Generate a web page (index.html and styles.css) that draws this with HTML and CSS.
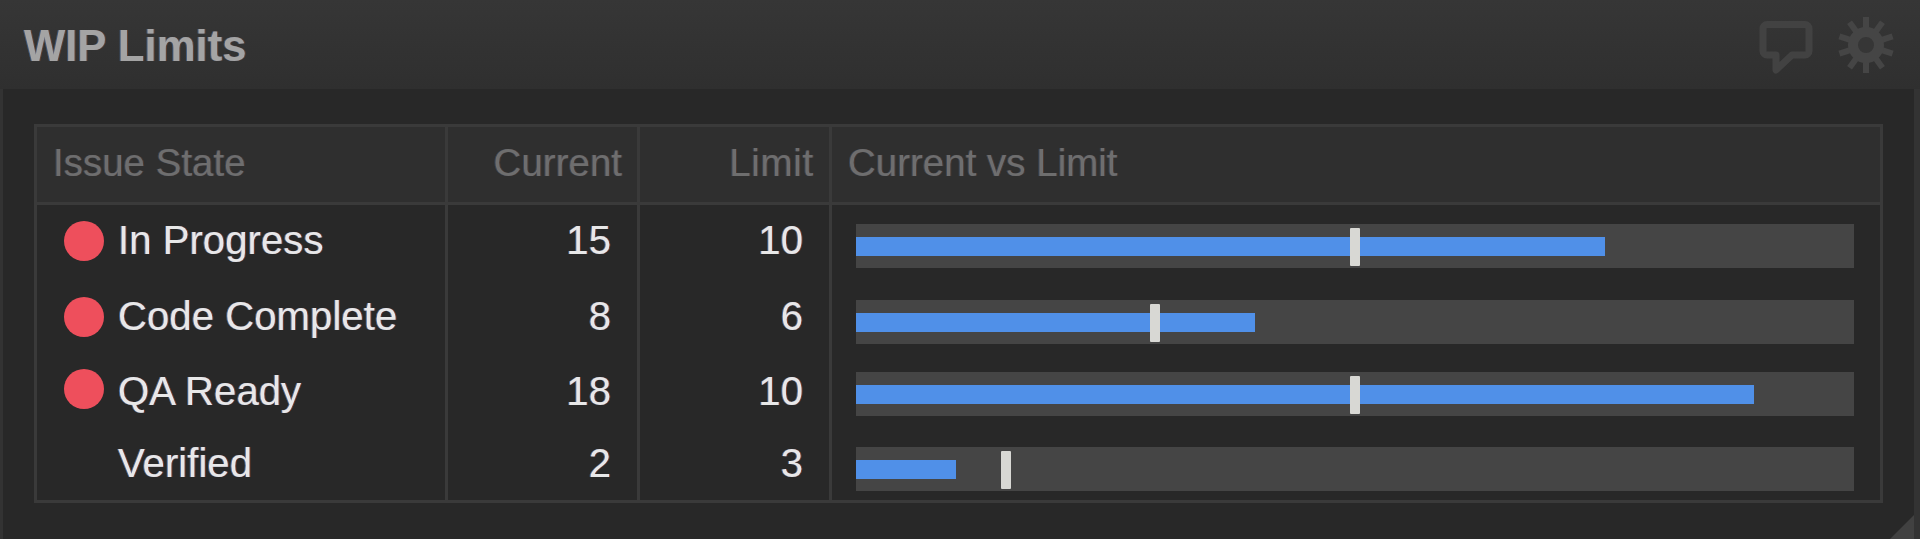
FILE: index.html
```html
<!DOCTYPE html>
<html lang="en">
<head>
<meta charset="utf-8">
<title>WIP Limits</title>
<link rel="stylesheet" href="styles.css">
</head>
<body>
<section class="panel">
  <header class="panel-head">
    <h1 class="panel-title">WIP Limits</h1>
    <div class="panel-tools">
      <svg class="icon-bubble" viewBox="0 0 54 54" aria-hidden="true"><path d="M8 3.500H46a4 4 0 0 1 4 4V30a4 4 0 0 1-4 4H33L17 49V34H8a4 4 0 0 1-4-4V7.500a4 4 0 0 1 4-4Z"/></svg>
      <svg class="icon-gear" viewBox="-29 -29 58 58" aria-hidden="true">
        <g class="gear-teeth">
          <line x1="0" y1="-28" x2="0" y2="28"/>
          <line x1="0" y1="-28" x2="0" y2="28" transform="rotate(36)"/>
          <line x1="0" y1="-28" x2="0" y2="28" transform="rotate(72)"/>
          <line x1="0" y1="-28" x2="0" y2="28" transform="rotate(108)"/>
          <line x1="0" y1="-28" x2="0" y2="28" transform="rotate(144)"/>
        </g>
        <circle class="gear-ring" r="13"/>
      </svg>
    </div>
  </header>
  <div class="panel-body">
    <div class="wip-table">
      <div class="cell head">Issue State</div>
      <div class="cell head num-head">Current</div>
      <div class="cell head num-head limit-head">Limit</div>
      <div class="cell head last">Current vs Limit</div>

      <div class="cell state"><span class="dot"></span><span class="label">In Progress</span></div>
      <div class="cell num"><span class="label">15</span></div>
      <div class="cell num"><span class="label">10</span></div>
      <div class="cell chart last"><div class="track"><div class="fill" style="width:75%"></div><div class="tick" style="left:50%"></div></div></div>

      <div class="cell state"><span class="dot"></span><span class="label">Code Complete</span></div>
      <div class="cell num"><span class="label">8</span></div>
      <div class="cell num"><span class="label">6</span></div>
      <div class="cell chart last"><div class="track"><div class="fill" style="width:40%"></div><div class="tick" style="left:30%"></div></div></div>

      <div class="cell state"><span class="dot"></span><span class="label low">QA Ready</span></div>
      <div class="cell num"><span class="label low">18</span></div>
      <div class="cell num"><span class="label low">10</span></div>
      <div class="cell chart last"><div class="track"><div class="fill" style="width:90%"></div><div class="tick" style="left:50%"></div></div></div>

      <div class="cell state"><span class="dot none"></span><span class="label">Verified</span></div>
      <div class="cell num"><span class="label">2</span></div>
      <div class="cell num"><span class="label">3</span></div>
      <div class="cell chart last"><div class="track"><div class="fill" style="width:10%"></div><div class="tick" style="left:15%"></div></div></div>
    </div>
  </div>
  <div class="resizer"></div>
</section>
</body>
</html>
```
FILE: styles.css
```css
* { box-sizing: border-box; }
html, body { margin: 0; height: 100%; }
body {
  background: #333;
  font-family: "Liberation Sans", Arial, sans-serif;
  overflow: hidden;
}
.panel {
  position: relative;
  height: 539px;
  display: flex;
  flex-direction: column;
  filter: blur(0.6px);
}
.panel-head {
  height: 89px;
  flex: none;
  display: flex;
  align-items: center;
  justify-content: space-between;
  padding: 0 25px 0 24px;
  background: linear-gradient(#363636, #2f2f2f);
}
.panel-title {
  margin: 0 0 -3px;
  font-size: 43.700px;
  font-weight: 700;
  color: #a4a4a4;
  text-shadow: -1px 0 rgba(90, 160, 255, 0.35), 1px 0 rgba(220, 110, 50, 0.3);
}
.panel-tools { display: flex; align-items: center; gap: 24px; }
.icon-bubble { width: 54px; height: 54px; margin-top: 6px; fill: none; stroke: #424242; stroke-width: 7; stroke-linejoin: round; }
.icon-gear { width: 58px; height: 58px; }
.gear-teeth line { stroke: #454545; stroke-width: 6; }
.gear-ring { fill: #363636; stroke: #454545; stroke-width: 10; }
.panel-body {
  flex: 1;
  margin: 0 6px 0 3px;
  padding: 35px 31px 0;
  background: #282828;
}
.wip-table {
  display: grid;
  grid-template-columns: 411px 192px 192px 1fr;
  grid-template-rows: 78px 76px 72px 75px 72px;
  height: 379px;
  border: 3px solid #3a3a3a;
}
.cell {
  border-right: 3px solid #3a3a3a;
  display: flex;
  align-items: flex-start;
  color: #e8e8e8;
  font-size: 40.200px;
}
.cell.last { border-right: 0; }
.head {
  align-items: center;
  background: #2f2f2f;
  border-bottom: 3px solid #3a3a3a;
  color: #6e6e6e;
  font-size: 38.500px;
  padding: 0 15px 3px 16px;
  text-shadow: -1px 0 rgba(90, 160, 255, 0.2), 1px 0 rgba(220, 110, 50, 0.18);
}
.num-head { justify-content: flex-end; }
.limit-head { letter-spacing: 0.7px; }
.state { padding: 15px 0 0 27px; }
.label {
  display: block;
  line-height: 46px;
  margin-top: -2px;
  text-shadow: -1px 0 rgba(90, 160, 255, 0.55), 1px 0 rgba(220, 90, 40, 0.5);
}
.label.low { margin-top: 1px; }
.dot {
  width: 40px;
  height: 40px;
  margin-top: 1px;
  border-radius: 50%;
  background: #ee4f5c;
  margin-right: 14px;
  flex: none;
}
.dot.none { background: transparent; }
.num { justify-content: flex-end; padding: 15px 26px 0 0; }
.chart { padding: 19px 26px 0 24px; }
.track {
  position: relative;
  width: 100%;
  height: 44px;
  background: #454545;
}
.fill {
  position: absolute;
  left: 0;
  top: 13px;
  height: 19px;
  background: #5090e8;
}
.tick {
  position: absolute;
  top: 4px;
  width: 10px;
  height: 38px;
  margin-left: -5px;
  border-radius: 1px;
  background: #d8d8d4;
}
.resizer {
  position: absolute;
  right: 6px;
  bottom: 0;
  width: 0;
  height: 0;
  border-left: 24px solid transparent;
  border-bottom: 24px solid #414141;
}
```
